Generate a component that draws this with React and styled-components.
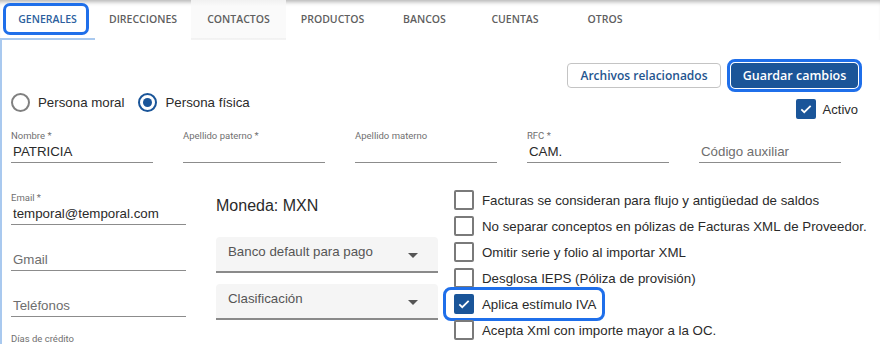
import React from 'react'
import styled, { createGlobalStyle } from 'styled-components'

const GlobalStyle = createGlobalStyle`
  body {
    margin: 0 ;
    background: #fff ;
    font-family: "Liberation Sans", Arial, sans-serif ;
    color: #2a2a2a ;
  }
`

const tabs = [
  { label: 'Generales', width: 95, active: true },
  { label: 'Direcciones', width: 96 },
  { label: 'Contactos', width: 95, shaded: true },
  { label: 'Productos', width: 93 },
  { label: 'Bancos', width: 91 },
  { label: 'Cuentas', width: 90 },
  { label: 'Otros', width: 90 },
]

const options = [
  { label: 'Facturas se consideran para flujo y antigüedad de saldos' },
  { label: 'No separar conceptos en pólizas de Facturas XML de Proveedor.' },
  { label: 'Omitir serie y folio al importar XML' },
  { label: 'Desglosa IEPS (Póliza de provisión)' },
  { label: 'Aplica estímulo IVA', checked: true, focused: true },
  { label: 'Acepta Xml con importe mayor a la OC.' },
]

function Check() {
  return (
    <svg width="14" height="14" viewBox="0 0 24 24">
      <path d="M4 12.5l5 5L20 6.5" fill="none" stroke="#fff" strokeWidth="3" />
    </svg>
  )
}

function Field({ label, value, placeholder }) {
  return (
    <FieldBox>
      <FieldLabel>{label}</FieldLabel>
      <FieldInput muted={!value}>{value || placeholder}</FieldInput>
    </FieldBox>
  )
}

function Select({ label }) {
  return (
    <SelectBox>
      <span>{label}</span>
      <Caret />
    </SelectBox>
  )
}

export default function App() {
  return (
    <Page>
      <GlobalStyle />
      <TabBar>
        {tabs.map((t) => (
          <Tab key={t.label} width={t.width} active={t.active} shaded={t.shaded}>
            {t.label}
          </Tab>
        ))}
      </TabBar>

      <Content>
        <TopRow>
          <RadioGroup>
            <RadioItem>
              <Radio />
              Persona moral
            </RadioItem>
            <RadioItem>
              <Radio checked />
              Persona física
            </RadioItem>
          </RadioGroup>

          <Actions>
            <Buttons>
              <OutlineButton>Archivos relacionados</OutlineButton>
              <PrimaryButton>Guardar cambios</PrimaryButton>
            </Buttons>
            <ActiveRow>
              <Box checked><Check /></Box>
              Activo
            </ActiveRow>
          </Actions>
        </TopRow>

        <FieldsRow>
          <Field label="Nombre *" value="PATRICIA" />
          <Field label="Apellido paterno *" />
          <Field label="Apellido materno" />
          <Field label="RFC *" value="CAM." />
          <Field label="" placeholder="Código auxiliar" />
        </FieldsRow>

        <Lower>
          <LeftCol>
            <Field label="Email *" value="temporal@temporal.com" />
            <Field label="" placeholder="Gmail" />
            <Field label="" placeholder="Teléfonos" />
            <SmallLabel>Días de crédito</SmallLabel>
          </LeftCol>

          <MiddleCol>
            <Currency>Moneda: MXN</Currency>
            <Select label="Banco default para pago" />
            <Select label="Clasificación" />
          </MiddleCol>

          <OptionList>
            {options.map((o) => (
              <OptionRow key={o.label} focused={o.focused}>
                <Box checked={o.checked}>{o.checked && <Check />}</Box>
                {o.label}
              </OptionRow>
            ))}
          </OptionList>
        </Lower>
      </Content>
    </Page>
  )
}

const Page = styled.div`
  width: 880px ;
  height: 344px ;
  overflow: hidden ;
  display: flex ;
  flex-direction: column ;
`
const TabBar = styled.div`
  display: flex ;
  height: 40px ;
  flex-shrink: 0 ;
  box-shadow: inset 0 5px 4px -3px rgba(0,0,0,.3) ;
`
const Tab = styled.div`
  position: relative ;
  width: ${p => p.width}px ;
  display: flex ;
  align-items: center ;
  justify-content: center ;
  padding-bottom: 1px ;
  box-sizing: border-box ;
  font-family: "Open Sans", sans-serif ;
  font-size: 10.5px ;
  font-weight: 600 ;
  text-transform: uppercase ;
  color: ${p => p.active ? '#2c5f9e' : '#5f5f5f'} ;
  background: ${p => p.shaded ? 'linear-gradient(#f1f1f1 0, #fafafa 6px)' : 'transparent'} ;
  border-bottom: 2px solid ${p => p.active ? '#a9c9ef' : 'transparent'} ;

  &::after {
    content: '' ;
    display: ${p => p.active ? 'block' : 'none'} ;
    position: absolute ;
    top: 3px ;
    left: 3px ;
    right: 6px ;
    bottom: 3px ;
    border: 3px solid #1f6fea ;
    border-radius: 7px ;
  }
`
const Content = styled.div`
  flex: 1 ;
  border-left: 2px solid #a9c9ef ;
  padding: 23px 22px 0 9px ;
`
const TopRow = styled.div`
  display: flex ;
  justify-content: space-between ;
  align-items: flex-start ;
`
const RadioGroup = styled.div`
  display: flex ;
  gap: 14px ;
  margin-top: 29px ;
`
const RadioItem = styled.label`
  display: flex ;
  align-items: center ;
  gap: 8px ;
  font-size: 13.3px ;
  height: 20px ;
`
const Radio = styled.span`
  width: 19px ;
  height: 19px ;
  box-sizing: border-box ;
  border-radius: 50% ;
  border: 2px solid ${p => p.checked ? '#1a5599' : '#808080'} ;
  display: flex ;
  align-items: center ;
  justify-content: center ;

  &::before {
    content: '' ;
    display: ${p => p.checked ? 'block' : 'none'} ;
    width: 9px ;
    height: 9px ;
    border-radius: 50% ;
    background: #1a5599 ;
  }
`
const Actions = styled.div`
  display: flex ;
  flex-direction: column ;
  align-items: flex-end ;
`
const Buttons = styled.div`
  display: flex ;
  gap: 10px ;
`
const OutlineButton = styled.button`
  height: 25px ;
  width: 154px ;
  border: 1px solid #c4c4c4 ;
  border-radius: 4px ;
  background: #fff ;
  color: #24558f ;
  font-family: "Open Sans", sans-serif ;
  font-size: 12px ;
  font-weight: 600 ;
  padding: 0 ;
`
const PrimaryButton = styled(OutlineButton)`
  width: 127px ;
  background: #1b5598 ;
  border-color: #1b5598 ;
  color: #fff ;
  font-size: 12.5px ;
  outline: 3px solid #1f6fea ;
  outline-offset: 1px ;
`
const ActiveRow = styled.div`
  display: flex ;
  align-items: center ;
  gap: 7px ;
  margin-top: 11px ;
  margin-right: 0 ;
  font-size: 13px ;
`
const Box = styled.span`
  width: 20px ;
  height: 20px ;
  flex-shrink: 0 ;
  box-sizing: border-box ;
  border-radius: 2px ;
  border: 2px solid ${p => p.checked ? '#1a5599' : '#7a7a7a'} ;
  background: ${p => p.checked ? '#1a5599' : '#fff'} ;
  display: flex ;
  align-items: center ;
  justify-content: center ;
`
const FieldsRow = styled.div`
  display: grid ;
  grid-template-columns: repeat(5, 142px) ;
  column-gap: 30px ;
  margin-top: 10px ;
`
const FieldBox = styled.div`
  display: flex ;
  flex-direction: column ;
`
const FieldLabel = styled.div`
  height: 13px ;
  line-height: 13px ;
  font-family: Roboto, sans-serif ;
  font-size: 9.5px ;
  color: #707070 ;
  white-space: nowrap ;
`
const FieldInput = styled.div`
  height: 20px ;
  line-height: 20px ;
  padding-left: 2px ;
  font-size: 13.3px ;
  color: ${p => p.muted ? '#6e6e6e' : '#2a2a2a'} ;
  border-bottom: 1px solid #8c8c8c ;
`
const Lower = styled.div`
  display: grid ;
  grid-template-columns: 175px 222px 1fr ;
  column-gap: 30px ;
  margin-top: 28px ;
`
const LeftCol = styled.div`
  display: flex ;
  flex-direction: column ;
  gap: 12px ;
`
const SmallLabel = styled.div`
  font-family: Roboto, sans-serif ;
  font-size: 9.5px ;
  color: #707070 ;
  margin-top: 4px ;
`
const MiddleCol = styled.div`
  display: flex ;
  flex-direction: column ;
  gap: 11px ;
`
const Currency = styled.div`
  font-size: 16px ;
  line-height: 20px ;
  margin-top: 5px ;
  margin-bottom: 10px ;
`
const SelectBox = styled.div`
  height: 36px ;
  box-sizing: border-box ;
  background: #f5f5f5 ;
  border-radius: 4px 4px 0 0 ;
  border-bottom: 2px solid #8a8a8a ;
  display: flex ;
  align-items: center ;
  justify-content: space-between ;
  padding: 0 20px 0 12px ;
  font-size: 13.3px ;
  color: #555 ;

  span {
    margin-top: -6px ;
  }
`
const Caret = styled.i`
  width: 0 ;
  height: 0 ;
  border-left: 5px solid transparent ;
  border-right: 5px solid transparent ;
  border-top: 5px solid #555 ;
  margin-top: 2px ;
`
const OptionList = styled.div`
  display: flex ;
  flex-direction: column ;
  margin-left: -14px ;
  margin-top: -4px ;
`
const OptionRow = styled.div`
  position: relative ;
  height: 26px ;
  display: flex ;
  align-items: center ;
  gap: 8px ;
  font-size: 13.3px ;
  white-space: nowrap ;

  &::after {
    content: '' ;
    display: ${p => p.focused ? 'block' : 'none'} ;
    position: absolute ;
    top: -4px ;
    bottom: -4px ;
    left: -11px ;
    width: 162px ;
    border: 3px solid #1f6fea ;
    border-radius: 8px ;
    box-sizing: border-box ;
  }
`
